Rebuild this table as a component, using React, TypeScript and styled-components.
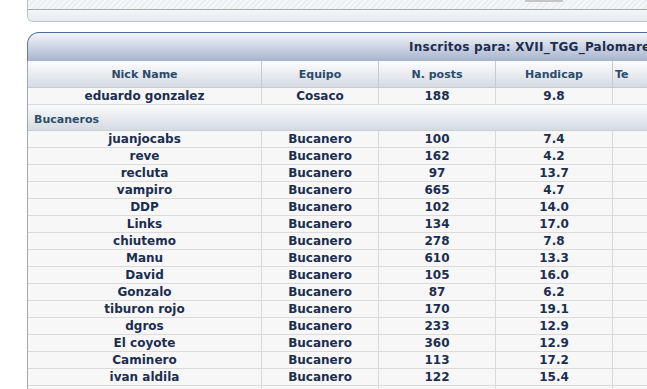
import React from "react";
import styled, { createGlobalStyle } from "styled-components";

const GlobalStyle = createGlobalStyle`
  html, body { margin: 0; padding: 0; background: #ffffff; overflow: hidden; }
  body { font-family: "DejaVu Sans", Verdana, sans-serif; }
`;

const Page = styled.div`
  width: 1100px;
  padding-left: 27px;
`;

const TopPanel = styled.div`
  border-left: 1px solid #b8c2cd;
  border-bottom: 1px solid #b3c1d1;
  border-bottom-left-radius: 6px;
  overflow: hidden;
  margin-bottom: 10px;
`;

const Hatched = styled.div`
  height: 9px;
  display: flex;
  align-items: flex-start;
  padding-left: 497px;
  background: repeating-linear-gradient(
    135deg,
    #eceff1 0px,
    #eceff1 2px,
    #f5f7f8 2px,
    #f5f7f8 4px
  );
  border-bottom: 1px solid #a7a9ab;
`;

const InputStub = styled.div`
  width: 38px;
  height: 2px;
  background: #c6c6c6;
`;

const LowerStrip = styled.div`
  height: 11px;
  background: linear-gradient(#f4f6f8, #e5eaef);
`;

const TitleBar = styled.div`
  box-sizing: border-box;
  height: 29px;
  border-top: 1px solid #4f6b9c;
  border-left: 1px solid #5f78a6;
  border-top-left-radius: 12px;
  background: linear-gradient(#f3f5fa, #a7b3cd);
  padding-left: 381px;
  font-size: 12px;
  font-weight: bold;
  letter-spacing: 0.25px;
  line-height: 28px;
  color: #1c2e4f;
  white-space: nowrap;
`;

const TableBody = styled.div`
  border-left: 1px solid #a2a6ab;
`;

const Row = styled.div<{ $h: number }>`
  display: grid;
  grid-template-columns: 234px 117px 117px 117px 200px;
  height: ${(p) => p.$h}px;
`;

const HeadCell = styled.div`
  box-sizing: border-box;
  border-right: 1px solid #c5cad1;
  border-bottom: 1px solid #c6cbd2;
  background: linear-gradient(#fcfcfd, #d6dbe2);
  color: #2a4b6a;
  font-size: 11px;
  font-weight: bold;
  line-height: 28px;
  text-align: center;
  white-space: nowrap;
  overflow: hidden;
`;

const LastHeadCell = styled(HeadCell)`
  text-align: left;
  padding-left: 2px;
`;

const Cell = styled.div`
  box-sizing: border-box;
  border-right: 1px solid #d9d9d9;
  border-bottom: 1px solid #dbdbdb;
  background: #f7f7f7;
  color: #1b2e50;
  font-size: 12px;
  font-weight: bold;
  line-height: 17px;
  text-align: center;
  white-space: nowrap;
  overflow: hidden;
`;

const GroupRow = styled.div`
  box-sizing: border-box;
  height: 26px;
  padding: 2px 0 0 6px;
  border-bottom: 1px solid #c9ced4;
  background: linear-gradient(#fafbfc, #d5dbe2);
  color: #2d4e6d;
  font-size: 11px;
  font-weight: bold;
  line-height: 25px;
  overflow: hidden;
`;

type Player = [string, string, string, string];

const solo: Player[] = [["eduardo gonzalez", "Cosaco", "188", "9.8"]];

const bucaneros: Player[] = [
  ["juanjocabs", "Bucanero", "100", "7.4"],
  ["reve", "Bucanero", "162", "4.2"],
  ["recluta", "Bucanero", "97", "13.7"],
  ["vampiro", "Bucanero", "665", "4.7"],
  ["DDP", "Bucanero", "102", "14.0"],
  ["Links", "Bucanero", "134", "17.0"],
  ["chiutemo", "Bucanero", "278", "7.8"],
  ["Manu", "Bucanero", "610", "13.3"],
  ["David", "Bucanero", "105", "16.0"],
  ["Gonzalo", "Bucanero", "87", "6.2"],
  ["tiburon rojo", "Bucanero", "170", "19.1"],
  ["dgros", "Bucanero", "233", "12.9"],
  ["El coyote", "Bucanero", "360", "12.9"],
  ["Caminero", "Bucanero", "113", "17.2"],
  ["ivan aldila", "Bucanero", "122", "15.4"],
  ["", "", "", ""],
];

const PlayerRow = ({ p }: { p: Player }) => (
  <Row $h={17}>
    <Cell>{p[0]}</Cell>
    <Cell>{p[1]}</Cell>
    <Cell>{p[2]}</Cell>
    <Cell>{p[3]}</Cell>
    <Cell />
  </Row>
);

export default function App() {
  return (
    <>
      <GlobalStyle />
      <Page>
        <TopPanel>
          <Hatched>
            <InputStub />
          </Hatched>
          <LowerStrip />
        </TopPanel>
        <TitleBar>Inscritos para: XVII_TGG_Palomares</TitleBar>
        <TableBody>
          <Row $h={27}>
            <HeadCell>Nick Name</HeadCell>
            <HeadCell>Equipo</HeadCell>
            <HeadCell>N. posts</HeadCell>
            <HeadCell>Handicap</HeadCell>
            <LastHeadCell>Te</LastHeadCell>
          </Row>
          {solo.map((p, i) => (
            <PlayerRow key={"s" + i} p={p} />
          ))}
          <GroupRow>Bucaneros</GroupRow>
          {bucaneros.map((p, i) => (
            <PlayerRow key={"b" + i} p={p} />
          ))}
        </TableBody>
      </Page>
    </>
  );
}
